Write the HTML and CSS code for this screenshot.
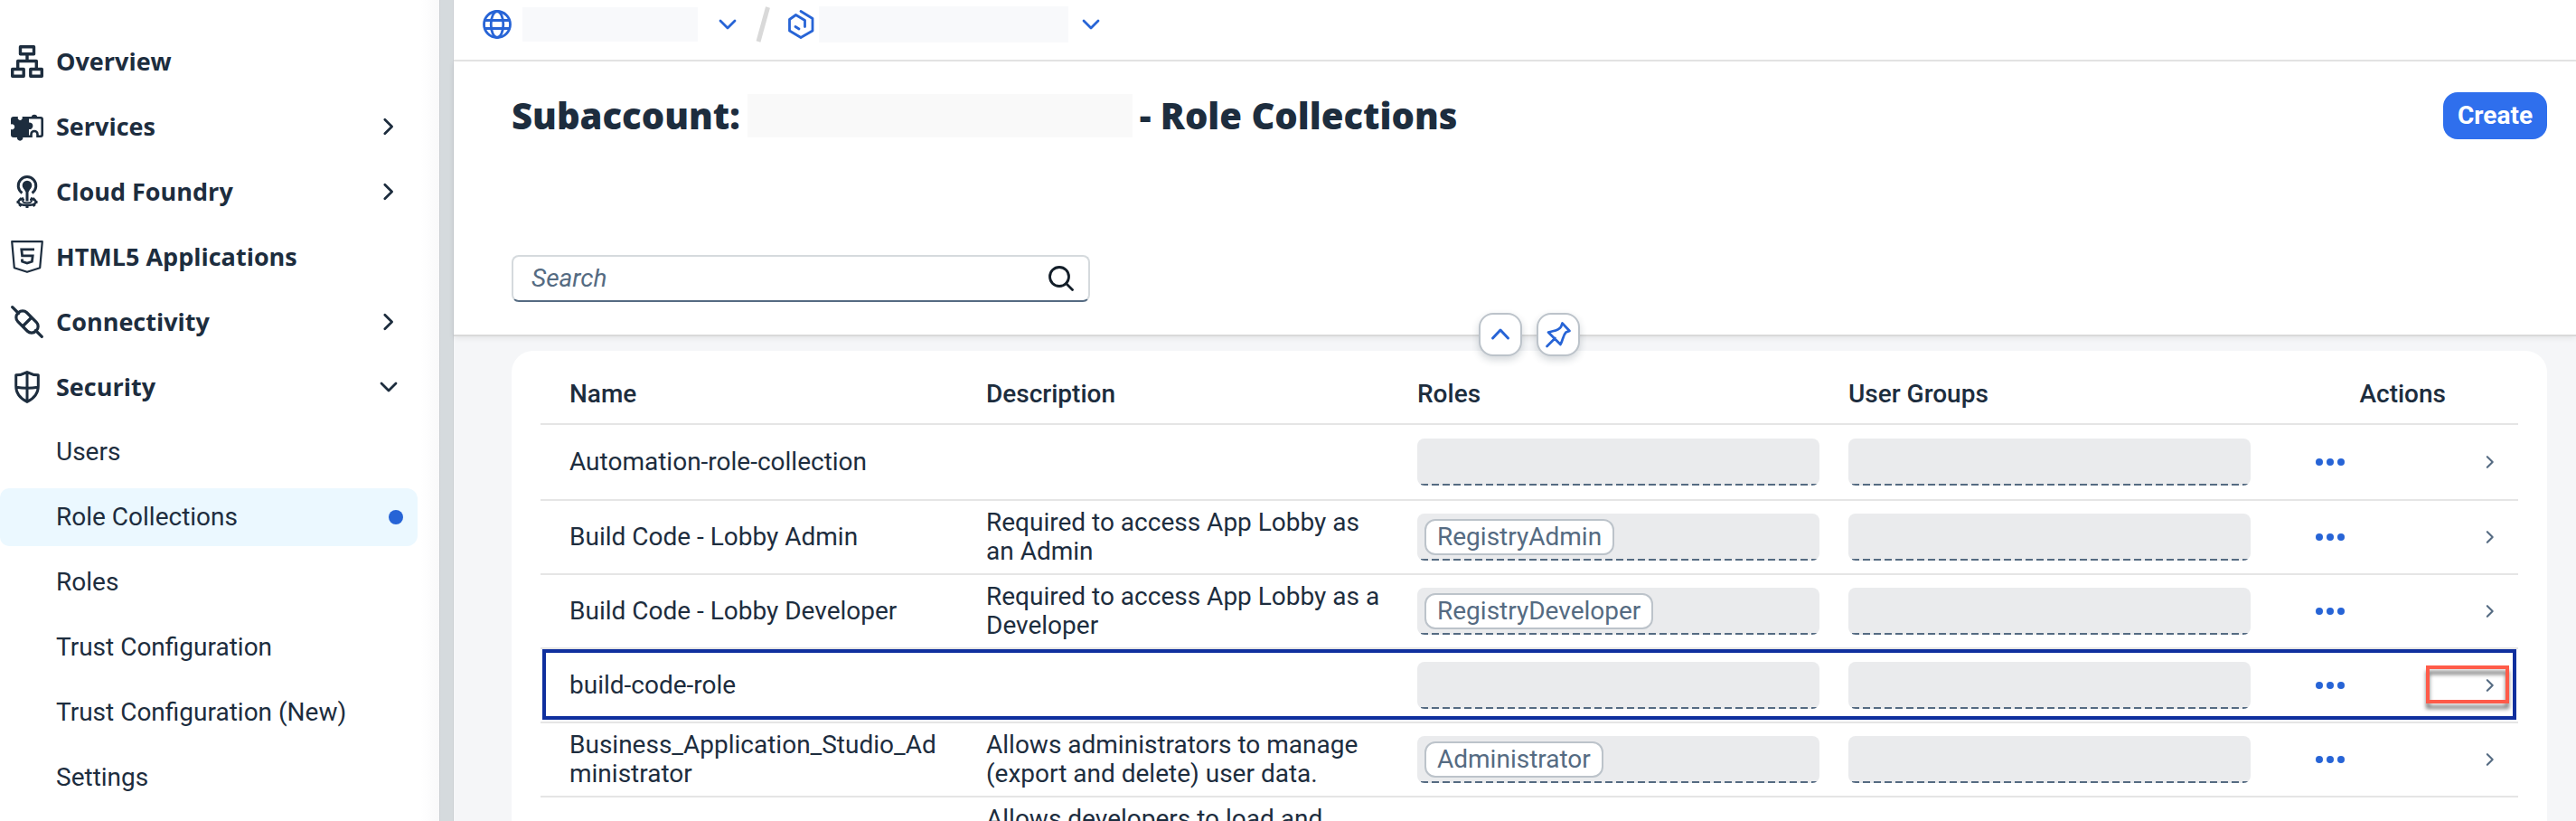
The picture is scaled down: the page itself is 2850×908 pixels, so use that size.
FILE: index.html
```
<!DOCTYPE html>
<html lang="en">
<head>
<meta charset="utf-8">
<title>Role Collections</title>
<link rel="stylesheet" href="styles.css">
</head>
<body>
<svg class="sprite" aria-hidden="true">
  <symbol id="i-right" viewBox="0 0 20 20"><path d="M6.500 3.500L13 10L6.500 16.500" fill="none" stroke="currentColor" stroke-width="2.300" stroke-linecap="round" stroke-linejoin="round"/></symbol>
  <symbol id="i-down" viewBox="0 0 24 24"><path d="M4 8L12 16L20 8" fill="none" stroke="currentColor" stroke-width="2.800" stroke-linecap="round" stroke-linejoin="round"/></symbol>
  <symbol id="i-dots" viewBox="0 0 32 8"><g fill="currentColor"><circle cx="4" cy="4" r="4"/><circle cx="16" cy="4" r="4"/><circle cx="28" cy="4" r="4"/></g></symbol>
</svg>
<div class="shell">
  <nav class="sidebar" aria-label="Subaccount">
    <a class="item" href="#"><svg class="icon" viewBox="0 0 36 36" fill="none" stroke="currentColor" stroke-width="3.400" stroke-linejoin="round"><rect x="10.500" y="1.700" width="15" height="8"/><path d="M18 10V17.500M7.700 26V17.500H28.300V26"/><rect x="1.700" y="26.500" width="12.500" height="7.800"/><rect x="21.800" y="26.500" width="12.500" height="7.800"/></svg><span>Overview</span></a>
    <a class="item" href="#"><svg class="icon" viewBox="0 0 36 36"><path fill="currentColor" d="M3 7H8A2.600 2.600 0 1 0 12.500 7H20V13.500A3.800 3.800 0 1 1 20 21V30H13.300A3.200 3.200 0 1 1 7 30H3Q0 30 0 27V21A3 3 0 1 0 0 15.500V10Q0 7 3 7Z"/><path fill="none" stroke="currentColor" stroke-width="2.600" d="M19 8.300H33Q34.700 8.300 34.700 10V27Q34.700 28.700 33 28.700H29.500V26.500A3.500 3.500 0 0 0 22.500 26.500V28.700H19"/><path fill="currentColor" d="M22.800 8A3.200 3.200 0 1 1 29.200 8Z"/></svg><span>Services</span><svg class="chev" viewBox="0 0 20 20"><use href="#i-right"/></svg></a>
    <a class="item" href="#"><svg class="icon" viewBox="0 0 36 36" fill="none" stroke="currentColor"><path stroke-width="3" d="M12.500 19.500A9.800 9.800 0 1 1 23.500 19.500"/><circle cx="18" cy="11" r="5.300" fill="currentColor" stroke="none"/><path fill="currentColor" stroke="none" d="M14 14H22L19.500 18.500V28.500H16.500V18.500Z"/><path stroke-width="1.800" d="M15 26.500C12 27 12 30.500 18 30.500S24 27 21 26.500"/><path stroke-width="2.600" d="M14 25.300C5.500 27.300 6.500 33 18 33S30.500 27.300 22 25.300"/><path stroke-width="3" d="M6.500 29.500H9M27 29.500H29.500M9.500 34L11 32M26.500 34L25 32M18 36V33M9.500 25.500L12 27M26.500 25.500L24 27"/></svg><span>Cloud Foundry</span><svg class="chev" viewBox="0 0 20 20"><use href="#i-right"/></svg></a>
    <a class="item" href="#"><svg class="icon" viewBox="0 0 36 36" fill="none" stroke="currentColor"><path stroke-width="2.200" stroke-linejoin="round" d="M1.200 1.200H34.800L32.200 30.200L18 34.800L3.800 30.200Z"/><path stroke-width="2.800" d="M26 9.800H11.800L12.600 16.800H24.200L23.400 23.300L18 25L12.600 23.300L12.300 20.500"/></svg><span>HTML5 Applications</span></a>
    <a class="item" href="#"><svg class="icon" viewBox="0 0 36 36" fill="none" stroke="currentColor" stroke-width="3.200" stroke-linecap="round"><path d="M1.700 1.700L8.500 8.500M27.500 27.500L34.300 34.300M22.500 13.500L13.500 22.500"/><rect x="4" y="11" width="28" height="14" rx="6.500" transform="rotate(45 18 18)"/></svg><span>Connectivity</span><svg class="chev" viewBox="0 0 20 20"><use href="#i-right"/></svg></a>
    <a class="item" href="#"><svg class="icon" viewBox="0 0 36 36" fill="none" stroke="currentColor" stroke-width="3" stroke-linejoin="round"><path d="M18 1.600Q24 4.800 30.300 4.800V17C30.300 26 25 31 18 34.400C11 31 5.700 26 5.700 17V4.800Q12 4.800 18 1.600ZM18 2V34M6 18.300Q18 20 30 18.300"/></svg><span>Security</span><svg class="chev" viewBox="0 0 24 24"><use href="#i-down"/></svg></a>
    <a class="item sub" href="#"><span>Users</span></a>
    <a class="item sub selected" href="#" aria-current="page"><span>Role Collections</span><i class="dot"></i></a>
    <a class="item sub" href="#"><span>Roles</span></a>
    <a class="item sub" href="#"><span>Trust Configuration</span></a>
    <a class="item sub" href="#"><span>Trust Configuration (New)</span></a>
    <a class="item sub" href="#"><span>Settings</span></a>
  </nav>
  <div class="splitter"></div>
  <main class="main">
    <div class="crumbs">
      <svg class="crumb-icon" viewBox="0 0 32 32" fill="none" stroke="currentColor" stroke-width="2.800"><circle cx="16" cy="16" r="14.500"/><ellipse cx="16" cy="16" rx="6.800" ry="14.500"/><path d="M2.500 11.500H29.500M2.500 20.500H29.500"/></svg>
      <span class="mask mask-account"></span>
      <button class="crumb-btn" aria-label="Switch account"><svg viewBox="0 0 24 24"><use href="#i-down"/></svg></button>
      <svg class="slash" viewBox="0 0 16 40"><path d="M3 39L13.500 1" stroke="currentColor" stroke-width="5"/></svg>
      <svg class="crumb-icon" viewBox="0 0 32 32" fill="none" stroke="currentColor" stroke-width="2.800" stroke-linejoin="round" stroke-linecap="round"><path d="M16 1.500L29 9.500V23L16 30.500L3.500 23V10.500L10.500 5.500L20.500 11.500V18.500"/><path d="M10 18.500L14 21"/></svg>
      <span class="mask mask-sub"></span>
      <button class="crumb-btn" aria-label="Switch subaccount"><svg viewBox="0 0 24 24"><use href="#i-down"/></svg></button>
    </div>
    <header class="head">
      <div class="title-row">
        <h1 class="title"><span>Subaccount:</span><span class="mask mask-title"></span><span>- Role Collections</span></h1>
        <button class="create">Create</button>
      </div>
      <div class="search">
        <input type="search" placeholder="Search" aria-label="Search">
        <svg class="search-icon" viewBox="0 0 28 28" fill="none" stroke="currentColor" stroke-width="2.800" stroke-linecap="round"><circle cx="12" cy="12" r="10.500"/><path d="M19.500 19.500L26.500 26.500"/></svg>
      </div>
      <div class="head-tools">
        <button class="tool" aria-label="Collapse header"><svg viewBox="0 0 32 32" fill="none" stroke="currentColor" stroke-width="3" stroke-linecap="round" stroke-linejoin="round"><path d="M7.500 20L16 11L24.500 20"/></svg></button>
        <button class="tool" aria-label="Pin header"><svg viewBox="0 0 32 32" fill="none" stroke="currentColor" stroke-width="2.700" stroke-linecap="round" stroke-linejoin="round"><path d="M20.500 3.500L28.500 12L24.500 13.500C21.500 16.500 21.500 21 18.500 27L5 13.500C11.500 11.500 16 12 19 7.500ZM12.500 20L3.500 29"/></svg></button>
      </div>
    </header>
    <section class="card">
      <table class="roles">
        <colgroup><col><col><col><col><col class="c-actions"><col class="c-nav"></colgroup>
        <thead>
          <tr><th>Name</th><th>Description</th><th>Roles</th><th>User Groups</th><th class="right">Actions</th><th></th></tr>
        </thead>
        <tbody>
          <tr><td>Automation-role-collection</td><td></td><td><div class="field"></div></td><td><div class="field"></div></td><td class="acts"><button class="more" aria-label="More actions"><svg viewBox="0 0 32 8"><use href="#i-dots"/></svg></button></td><td><svg class="nav" viewBox="0 0 20 20"><use href="#i-right"/></svg></td></tr>
          <tr><td>Build Code - Lobby Admin</td><td>Required to access App Lobby as an Admin</td><td><div class="field"><span class="token">RegistryAdmin</span></div></td><td><div class="field"></div></td><td class="acts"><button class="more" aria-label="More actions"><svg viewBox="0 0 32 8"><use href="#i-dots"/></svg></button></td><td><svg class="nav" viewBox="0 0 20 20"><use href="#i-right"/></svg></td></tr>
          <tr><td>Build Code - Lobby Developer</td><td>Required to access App Lobby as a Developer</td><td><div class="field"><span class="token">RegistryDeveloper</span></div></td><td><div class="field"></div></td><td class="acts"><button class="more" aria-label="More actions"><svg viewBox="0 0 32 8"><use href="#i-dots"/></svg></button></td><td><svg class="nav" viewBox="0 0 20 20"><use href="#i-right"/></svg></td></tr>
          <tr class="focused"><td>build-code-role</td><td></td><td><div class="field"></div></td><td><div class="field"></div></td><td class="acts"><button class="more" aria-label="More actions"><svg viewBox="0 0 32 8"><use href="#i-dots"/></svg></button></td><td><svg class="nav" viewBox="0 0 20 20"><use href="#i-right"/></svg><span class="row-frame"></span><span class="callout"></span></td></tr>
          <tr><td>Business_Application_Studio_Administrator</td><td>Allows administrators to manage (export and delete) user data.</td><td><div class="field"><span class="token">Administrator</span></div></td><td><div class="field"></div></td><td class="acts"><button class="more" aria-label="More actions"><svg viewBox="0 0 32 8"><use href="#i-dots"/></svg></button></td><td><svg class="nav" viewBox="0 0 20 20"><use href="#i-right"/></svg></td></tr>
          <tr class="last"><td></td><td>Allows developers to load and</td><td></td><td></td><td></td><td></td></tr>
        </tbody>
      </table>
    </section>
  </main>
</div>
</body>
</html>
```
FILE: styles.css
```
* { box-sizing: border-box; }
body {
  margin: 0;
  font-family: Roboto, "Noto Sans", sans-serif;
  font-size: 28px;
  line-height: 32px;
  color: #1d2d3e;
  background: #f5f6f7;
}
button, input { font: inherit; color: inherit; margin: 0; }
button { background: none; border: 0; padding: 0; cursor: pointer; }
svg { display: block; flex: none; }
.sprite { position: absolute; width: 0; height: 0; }

.shell { display: flex; height: 100vh; overflow: hidden; }

.sidebar {
  flex: none;
  width: 486px;
  padding: 36px 24px 0 0;
  display: flex;
  flex-direction: column;
  gap: 8px;
  background: linear-gradient(to left, #f9f9fa, #fff 20px);
}
.item {
  flex: none;
  height: 64px;
  display: flex;
  align-items: center;
  gap: 14px;
  padding: 0 20px 0 12px;
  color: #1d2d3e;
  font-family: "Open Sans", "Noto Sans", sans-serif;
  font-size: 27px;
  line-height: 30px;
  font-weight: 700;
  text-decoration: none;
}
.item .icon { width: 36px; height: 36px; }
.item .chev { width: 24px; height: 24px; margin-left: auto; }
.sub { padding-left: 62px; padding-right: 16px; font-family: Roboto, "Noto Sans", sans-serif; font-size: 28px; line-height: 32px; font-weight: 400; }
.selected { background: #ebf8ff; border-radius: 10px 12px 12px 10px; }
.dot { width: 16px; height: 16px; margin-left: auto; border-radius: 50%; background: #2764d6; }

.splitter { flex: none; width: 16px; background: #d5dadd; border: solid #cbcfd3; border-width: 0 1px; }

.main { flex: 1; min-width: 0; display: flex; flex-direction: column; background: #f5f6f8; }

.crumbs {
  flex: none;
  display: flex;
  align-items: center;
  height: 68px;
  padding: 0 32px 12px;
  color: #2764d6;
  background: #fff;
  border-bottom: 2px solid #e5e5e5;
}
.crumb-icon { width: 32px; height: 32px; }
.crumb-btn svg { width: 24px; height: 24px; }
.slash { width: 16px; height: 40px; margin: 0 18px 0 19px; color: #d9d9d9; }
.mask { display: block; background: #f8f9fb; }
.mask-account { width: 194px; height: 38px; margin: 0 21px 0 12px; }
.mask-sub { width: 276px; height: 40px; margin: 0 13px 0 4px; }
.mask-title { width: 426px; height: 48px; background: #f9f9f9; }

.head {
  flex: none;
  position: relative;
  padding: 34px 32px 36px 64px;
  background: #fff;
  border-bottom: 2px solid #d9d9d9;
  box-shadow: 0 2px 6px rgba(0, 0, 0, .08);
}
.title-row { display: flex; justify-content: space-between; align-items: center; margin-bottom: 128px; }
.title {
  display: flex;
  align-items: center;
  gap: 8px;
  margin: 0;
  font-family: "Open Sans", "Noto Sans", sans-serif;
  font-size: 40px;
  line-height: 48px;
  font-weight: 800;
}
.create { height: 52px; padding: 0 16px; border-radius: 16px; background: #2f6fed; color: #fff; font-weight: 700; }
.search {
  display: flex;
  align-items: center;
  width: 640px;
  height: 52px;
  padding: 0 16px 0 20px;
  border: 2px solid #d5dadd;
  border-bottom-color: #556b82;
  border-radius: 8px;
}
.search input { flex: 1; min-width: 0; border: 0; padding: 0; outline: 0; background: none; }
.search input::placeholder { color: #556b82; font-style: italic; opacity: 1; }
.search-icon { width: 28px; height: 28px; color: #131e29; }
.head-tools {
  position: absolute;
  left: 64px;
  right: 32px;
  bottom: -24px;
  display: flex;
  justify-content: center;
  gap: 16px;
}
.tool {
  display: grid;
  place-items: center;
  width: 48px;
  height: 48px;
  border: 2px solid #bcc3ca;
  border-radius: 16px;
  background: #fff;
  color: #2764d6;
  box-shadow: 0 4px 8px rgba(34, 53, 72, .2);
}
.tool svg { width: 32px; height: 32px; }

.card { flex: 1; min-height: 0; margin: 16px 32px 0 64px; padding: 16px 32px 0; background: #fff; border-radius: 24px 24px 0 0; }
.roles { width: 100%; table-layout: fixed; border-collapse: separate; border-spacing: 0; }
.c-actions { width: 216px; }
.c-nav { width: 64px; }
.roles th, .roles td { padding: 0 16px; border-bottom: 2px solid #e5e5e5; text-align: left; vertical-align: middle; }
.roles th:first-child, .roles td:first-child { padding-left: 32px; overflow-wrap: anywhere; }
.roles th { height: 66px; font-weight: 500; }
.roles th.right { text-align: right; }
.roles td { height: 82px; }
.roles tbody tr:first-child td { height: 84px; }
.roles td.acts { padding-left: 56px; }
.roles .last td { vertical-align: top; padding-top: 8px; border-bottom: 0; }
.field {
  height: 52px;
  padding: 6px 8px;
  border-radius: 8px;
  background: repeating-linear-gradient(to right, #556b82 0 8px, transparent 8px 12px) 4px 100% / 100% 2px no-repeat, #eaebed;
}
.token {
  display: inline-block;
  height: 40px;
  padding: 2px 12px;
  border: 2px solid #bcc3ca;
  border-radius: 12px;
  background: #fff;
  color: #556b82;
}
.more { display: block; color: #2764d6; }
.more svg { width: 32px; height: 8px; }
.nav { width: 18px; height: 18px; margin-left: 8px; color: #556b82; }
.focused { position: relative; }
.row-frame {
  position: absolute;
  inset: 0 2px 4px;
  border: 4px solid #0f2f9e;
  pointer-events: none;
}
.callout {
  position: absolute;
  top: 18px;
  right: 10px;
  width: 92px;
  height: 42px;
  border: 4px solid #ff5b49;
  filter: drop-shadow(0 6px 2px rgba(0, 0, 0, .5));
}
```
